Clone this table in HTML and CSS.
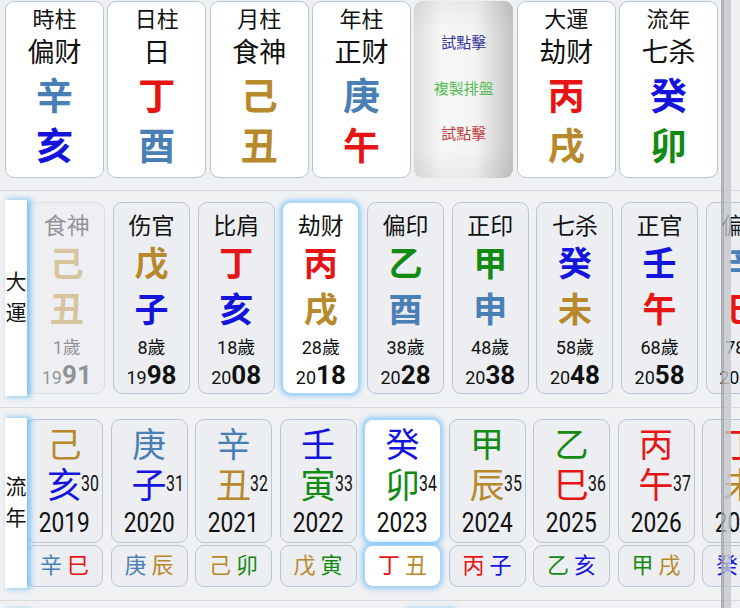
FILE: index.html
```html
<!DOCTYPE html>
<html lang="zh">
<head>
<meta charset="utf-8">
<title>排盤</title>
<link rel="stylesheet" href="styles.css">
</head>
<body>
<div class="page">
  <div class="pillars">
    <div class="pillar"><div class="p-label">時柱</div><div class="p-god">偏财</div><div class="p-stem s">辛</div><div class="p-branch b">亥</div></div>
    <div class="pillar"><div class="p-label">日柱</div><div class="p-god">日</div><div class="p-stem r">丁</div><div class="p-branch s">酉</div></div>
    <div class="pillar"><div class="p-label">月柱</div><div class="p-god">食神</div><div class="p-stem g">己</div><div class="p-branch g">丑</div></div>
    <div class="pillar"><div class="p-label">年柱</div><div class="p-god">正财</div><div class="p-stem s">庚</div><div class="p-branch r">午</div></div>
    <div class="actions">
      <span class="act act-blue">試點擊</span>
      <span class="act act-green">複製排盤</span>
      <span class="act act-red">試點擊</span>
    </div>
    <div class="pillar"><div class="p-label">大運</div><div class="p-god">劫财</div><div class="p-stem r">丙</div><div class="p-branch g">戌</div></div>
    <div class="pillar"><div class="p-label">流年</div><div class="p-god">七杀</div><div class="p-stem b">癸</div><div class="p-branch gr">卯</div></div>
  </div>

  <section class="band band-dayun">
    <div class="side">大<br>運</div>
    <div class="track track-dayun">
      <div class="dy past"><div class="dy-god">食神</div><div class="dy-stem g">己</div><div class="dy-branch g">丑</div><div class="dy-age">1歲</div><div class="dy-year"><span class="yy">19</span><span class="yb">91</span></div></div>
      <div class="dy"><div class="dy-god">伤官</div><div class="dy-stem g">戊</div><div class="dy-branch b">子</div><div class="dy-age">8歲</div><div class="dy-year"><span class="yy">19</span><span class="yb">98</span></div></div>
      <div class="dy"><div class="dy-god">比肩</div><div class="dy-stem r">丁</div><div class="dy-branch b">亥</div><div class="dy-age">18歲</div><div class="dy-year"><span class="yy">20</span><span class="yb">08</span></div></div>
      <div class="dy sel"><div class="dy-god">劫财</div><div class="dy-stem r">丙</div><div class="dy-branch g">戌</div><div class="dy-age">28歲</div><div class="dy-year"><span class="yy">20</span><span class="yb">18</span></div></div>
      <div class="dy"><div class="dy-god">偏印</div><div class="dy-stem gr">乙</div><div class="dy-branch s">酉</div><div class="dy-age">38歲</div><div class="dy-year"><span class="yy">20</span><span class="yb">28</span></div></div>
      <div class="dy"><div class="dy-god">正印</div><div class="dy-stem gr">甲</div><div class="dy-branch s">申</div><div class="dy-age">48歲</div><div class="dy-year"><span class="yy">20</span><span class="yb">38</span></div></div>
      <div class="dy"><div class="dy-god">七杀</div><div class="dy-stem b">癸</div><div class="dy-branch g">未</div><div class="dy-age">58歲</div><div class="dy-year"><span class="yy">20</span><span class="yb">48</span></div></div>
      <div class="dy"><div class="dy-god">正官</div><div class="dy-stem b">壬</div><div class="dy-branch r">午</div><div class="dy-age">68歲</div><div class="dy-year"><span class="yy">20</span><span class="yb">58</span></div></div>
      <div class="dy"><div class="dy-god">偏财</div><div class="dy-stem s">辛</div><div class="dy-branch r">巳</div><div class="dy-age">78歲</div><div class="dy-year"><span class="yy">20</span><span class="yb">68</span></div></div>
    </div>
  </section>

  <section class="band band-liunian">
    <div class="side">流<br>年</div>
    <div class="track track-liunian">
      <div class="ln"><div class="ln-main"><div class="ln-stem g">己</div><div class="ln-branch"><span class="br b">亥<span class="age">30</span></span></div><div class="ln-year"><span class="yr">2019</span></div></div><div class="ln-sub"><span class="s">辛</span><span class="r">巳</span></div></div>
      <div class="ln"><div class="ln-main"><div class="ln-stem s">庚</div><div class="ln-branch"><span class="br b">子<span class="age">31</span></span></div><div class="ln-year"><span class="yr">2020</span></div></div><div class="ln-sub"><span class="s">庚</span><span class="g">辰</span></div></div>
      <div class="ln"><div class="ln-main"><div class="ln-stem s">辛</div><div class="ln-branch"><span class="br g">丑<span class="age">32</span></span></div><div class="ln-year"><span class="yr">2021</span></div></div><div class="ln-sub"><span class="g">己</span><span class="gr">卯</span></div></div>
      <div class="ln"><div class="ln-main"><div class="ln-stem b">壬</div><div class="ln-branch"><span class="br gr">寅<span class="age">33</span></span></div><div class="ln-year"><span class="yr">2022</span></div></div><div class="ln-sub"><span class="g">戊</span><span class="gr">寅</span></div></div>
      <div class="ln sel"><div class="ln-main"><div class="ln-stem b">癸</div><div class="ln-branch"><span class="br gr">卯<span class="age">34</span></span></div><div class="ln-year"><span class="yr">2023</span></div></div><div class="ln-sub"><span class="r">丁</span><span class="g">丑</span></div></div>
      <div class="ln"><div class="ln-main"><div class="ln-stem gr">甲</div><div class="ln-branch"><span class="br g">辰<span class="age">35</span></span></div><div class="ln-year"><span class="yr">2024</span></div></div><div class="ln-sub"><span class="r">丙</span><span class="b">子</span></div></div>
      <div class="ln"><div class="ln-main"><div class="ln-stem gr">乙</div><div class="ln-branch"><span class="br r">巳<span class="age">36</span></span></div><div class="ln-year"><span class="yr">2025</span></div></div><div class="ln-sub"><span class="gr">乙</span><span class="b">亥</span></div></div>
      <div class="ln"><div class="ln-main"><div class="ln-stem r">丙</div><div class="ln-branch"><span class="br r">午<span class="age">37</span></span></div><div class="ln-year"><span class="yr">2026</span></div></div><div class="ln-sub"><span class="gr">甲</span><span class="g">戌</span></div></div>
      <div class="ln"><div class="ln-main"><div class="ln-stem r">丁</div><div class="ln-branch"><span class="br g">未<span class="age">38</span></span></div><div class="ln-year"><span class="yr">2027</span></div></div><div class="ln-sub"><span class="b">癸</span><span class="g">丑</span></div></div>
    </div>
  </section>

  <section class="band band-next">
    <div class="side side-next"></div>
    <div class="track track-next">
      <div class="nx"></div>
    </div>
  </section>

  <div class="scrollbar"></div>
</div>
</body>
</html>
```

FILE: styles.css
```css
html, body {
  margin: 0;
  padding: 0;
}

body {
  background: #eef0f2;
  font-family: Roboto, "Noto Sans CJK SC", sans-serif;
  color: #111;
  overflow: hidden;
}

.page {
  position: relative;
  width: 740px;
  height: 608px;
  overflow: hidden;
}

/* colours */
.s  { color: #4a7fb5; }
.b  { color: #1414dc; }
.r  { color: #e61414; }
.g  { color: #b7892c; }
.gr { color: #138a13; }

/* ---------- top pillars ---------- */
.pillars {
  display: grid;
  grid-template-columns: repeat(7, 99px);
  column-gap: 3.33px;
  height: 177px;
  padding: 1px 0 0 5px;
}

.pillar {
  background: #fff;
  border: 1.5px solid #b8c5d8;
  border-radius: 9px;
  display: flex;
  flex-direction: column;
  align-items: center;
  padding-top: 1px;
  box-sizing: border-box;
}

.p-label {
  font-size: 22px;
  height: 34px;
  line-height: 34px;
}

.p-god {
  font-size: 27px;
  height: 33px;
  line-height: 33px;
}

.p-stem {
  font-size: 37px;
  font-weight: 700;
  height: 55px;
  line-height: 55px;
}

.p-branch {
  font-size: 37px;
  font-weight: 700;
  height: 46px;
  line-height: 46px;
}

.actions {
  border-radius: 9px;
  background:
    linear-gradient(180deg, rgba(0,0,0,0.05) 0%, rgba(0,0,0,0) 18%, rgba(0,0,0,0) 82%, rgba(0,0,0,0.05) 100%),
    linear-gradient(90deg, #dedede 0%, #f8f8f8 28%, #f4f4f4 62%, #c4c4c4 100%);
  display: flex;
  flex-direction: column;
  align-items: center;
  justify-content: center;
}

.act {
  font-size: 15px;
  line-height: 45.5px;
}

.act-blue  { color: #34349e; }
.act-green { color: #55bb55; }
.act-red   { color: #c03c3c; }

/* ---------- bands ---------- */
.band {
  display: flex;
  border-top: 1px solid #d7dadf;
  background: #f0f1f3;
}

.side {
  position: relative;
  z-index: 2;
  flex: none;
  width: 22px;
  margin-left: 5px;
  background: #fff;
  box-shadow: 3px 0 5px 1px rgba(120, 192, 245, 0.9);
  display: flex;
  align-items: center;
  justify-content: center;
  text-align: center;
  font-size: 21px;
  line-height: 31px;
}

.track {
  display: flex;
  gap: 7.7px;
}

/* ---------- 大運 ---------- */
.band-dayun {
  margin-top: 12px;
  padding: 9px 0 11px;
  align-items: center;
}

.band-dayun .side {
  height: 196px;
}

.track-dayun {
  margin-left: 1.3px;
}

.dy {
  flex: none;
  width: 77px;
  height: 192px;
  box-sizing: border-box;
  border: 1.5px solid #b9c6d9;
  border-radius: 9px;
  background: #eceef1;
  display: flex;
  flex-direction: column;
  align-items: center;
  padding-top: 4px;
}

.dy.past {
  opacity: 0.42;
}

.dy.sel, .ln.sel .ln-main, .ln.sel .ln-sub {
  background: #fff;
  border-color: #a9d5f6;
  box-shadow: 0 0 5px 2px rgba(115, 190, 248, 0.75);
}

.dy-god {
  font-size: 23px;
  height: 40px;
  line-height: 40px;
}

.dy-stem, .dy-branch {
  font-size: 34px;
  font-weight: 700;
}

.dy-stem {
  height: 34px;
  line-height: 34px;
}

.dy-branch {
  height: 58px;
  line-height: 58px;
}

.dy-age {
  font-size: 18px;
  height: 18px;
  line-height: 18px;
}

.dy-year {
  height: 36px;
  line-height: 36px;
}

.yy {
  font-size: 18px;
}

.yb {
  font-size: 26px;
  font-weight: 700;
}

/* ---------- 流年 ---------- */
.band-liunian {
  padding: 10px 0 12px;
  align-items: flex-start;
}

.band-liunian .side {
  height: 170px;
}

.track-liunian {
  margin-left: -1px;
  gap: 7.5px;
  padding-top: 1px;
}

.ln {
  flex: none;
  width: 77px;
  display: flex;
  flex-direction: column;
  gap: 2px;
}

.ln-main, .ln-sub {
  box-sizing: border-box;
  border: 1.5px solid #b9c6d9;
  border-radius: 9px;
  background: #eceef1;
  text-align: center;
}

.ln-main {
  height: 124px;
  padding-top: 5px;
}

.ln-stem {
  font-size: 34px;
  height: 40px;
  line-height: 40px;
}

.ln-branch {
  height: 44px;
}

.br {
  position: relative;
  display: inline-block;
  font-size: 35px;
  line-height: 44px;
}

.age {
  position: absolute;
  left: 100%;
  top: -3px;
  margin-left: -1px;
  font-family: Roboto, sans-serif;
  font-size: 22px;
  color: #111;
  transform: scaleX(0.72);
  transform-origin: left center;
}

.ln-year {
  height: 28px;
  line-height: 28px;
}

.yr {
  display: inline-block;
  font-size: 27px;
  transform: scaleX(0.84);
}

.ln-sub {
  height: 42px;
  font-size: 22px;
  line-height: 40px;
  letter-spacing: 5px;
  padding-left: 5px;
}

/* ---------- next band (peeking) ---------- */
.band-next {
  padding-top: 9px;
  height: 60px;
}

.side-next {
  height: 60px;
}

.track-next {
  margin-left: 376px;
}

.nx {
  width: 56px;
  height: 60px;
  border-radius: 9px;
  background: #fff;
  box-shadow: 0 0 5px 2px rgba(115, 190, 248, 0.75);
}

/* ---------- overlay scrollbar ---------- */
.scrollbar {
  position: absolute;
  top: 0;
  left: 721px;
  width: 10px;
  height: 608px;
  z-index: 5;
  background: linear-gradient(90deg, rgba(160, 164, 170, 0.8) 0 3px, rgba(196, 199, 204, 0.8) 3px 100%);
}
```
